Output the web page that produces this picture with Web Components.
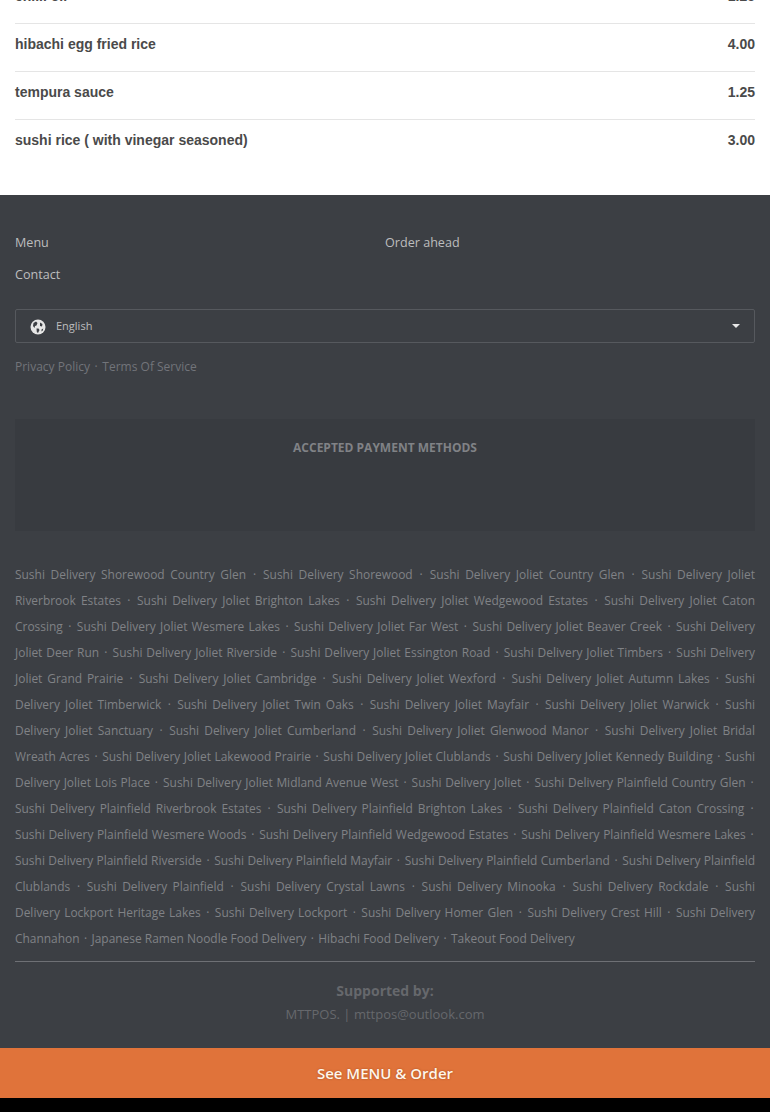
<!DOCTYPE html>
<html lang="en">
<head>
<meta charset="utf-8">
<title>Menu</title>
<style>
  html, body { margin: 0; height: 1112px; overflow: hidden; background: #000; }
  body { font-family: "Open Sans", sans-serif; }
  menu-list { margin-top: -24px; }
</style>
</head>
<body>
<menu-list>
  <menu-row name="chilli oil" price="1.25"></menu-row>
  <menu-row name="hibachi egg fried rice" price="4.00"></menu-row>
  <menu-row name="tempura sauce" price="1.25"></menu-row>
  <menu-row name="sushi rice ( with vinegar seasoned)" price="3.00" last></menu-row>
</menu-list>
<site-footer></site-footer>
<order-bar>See MENU &amp; Order</order-bar>

<script>
const AREAS = [
  'Shorewood Country Glen', 'Shorewood', 'Joliet Country Glen', 'Joliet Riverbrook Estates',
  'Joliet Brighton Lakes', 'Joliet Wedgewood Estates', 'Joliet Caton Crossing', 'Joliet Wesmere Lakes',
  'Joliet Far West', 'Joliet Beaver Creek', 'Joliet Deer Run', 'Joliet Riverside',
  'Joliet Essington Road', 'Joliet Timbers', 'Joliet Grand Prairie', 'Joliet Cambridge',
  'Joliet Wexford', 'Joliet Autumn Lakes', 'Joliet Timberwick', 'Joliet Twin Oaks',
  'Joliet Mayfair', 'Joliet Warwick', 'Joliet Sanctuary', 'Joliet Cumberland',
  'Joliet Glenwood Manor', 'Joliet Bridal Wreath Acres', 'Joliet Lakewood Prairie', 'Joliet Clublands',
  'Joliet Kennedy Building', 'Joliet Lois Place', 'Joliet Midland Avenue West', 'Joliet',
  'Plainfield Country Glen', 'Plainfield Riverbrook Estates', 'Plainfield Brighton Lakes', 'Plainfield Caton Crossing',
  'Plainfield Wesmere Woods', 'Plainfield Wedgewood Estates', 'Plainfield Wesmere Lakes', 'Plainfield Riverside',
  'Plainfield Mayfair', 'Plainfield Cumberland', 'Plainfield Clublands', 'Plainfield',
  'Crystal Lawns', 'Minooka', 'Rockdale', 'Lockport Heritage Lakes',
  'Lockport', 'Homer Glen', 'Crest Hill', 'Channahon'
];
const LINKS = AREAS.map(a => 'Sushi Delivery ' + a).concat([
  'Japanese Ramen Noodle Food Delivery', 'Hibachi Food Delivery', 'Takeout Food Delivery'
]);

class MenuList extends HTMLElement {
  constructor() {
    super();
    this.shadow = this.attachShadow({ mode: 'open' });
    this.shadow.innerHTML = `
      <style>
        :host { display: block; background: #fff; padding: 0 15px 27px; }
      </style>
      <slot></slot>
    `;
  }
}

class MenuRow extends HTMLElement {
  constructor() {
    super();
    this.shadow = this.attachShadow({ mode: 'open' });
  }

  connectedCallback() {
    const border = this.hasAttribute('last') ? 'none' : '1px solid #e5e5e5';
    this.shadow.innerHTML = `
      <style>
        :host {
          display: flex; justify-content: space-between; height: 48px; box-sizing: border-box;
          padding-top: 12px; border-bottom: ${border};
          font: bold 14px/17px "Liberation Sans", Arial, sans-serif; color: #4a4a4a;
        }
      </style>
      <span>${this.getAttribute('name')}</span>
      <span>${this.getAttribute('price')}</span>
    `;
  }
}

class LanguageSelect extends HTMLElement {
  constructor() {
    super();
    this.shadow = this.attachShadow({ mode: 'open' });
    this.shadow.innerHTML = `
      <style>
        :host {
          display: flex; align-items: center; height: 34px; box-sizing: border-box;
          padding: 0 14px; border: 1px solid #56595e; border-radius: 2px;
          font-size: 11px; color: #bcbdbe;
        }
        svg { width: 16px; height: 16px; margin: 1px 10px 0 0; }
        span { flex: 1; padding-bottom: 2px; }
        i { width: 0; height: 0; border: 4px solid transparent; border-top: 4px solid #e8e8e8; border-bottom: 0; }
      </style>
      <svg viewBox="0 0 16 16">
        <circle cx="8" cy="8" r="7.5" fill="#e6e6e6"/>
        <path d="M3.5 4 6 2.5 7.5 4 6.5 6.5 5 7 4.5 9 3 7ZM10 3.5 12.5 5 12 7.5 10 7ZM6.5 9.5 8.5 9.5 9.5 11 8 14 6.8 13ZM11.5 10.5 13.2 9.5 12.8 11.5 11.5 12.5Z" fill="#3c3f44"/>
      </svg>
      <span>English</span>
      <i></i>
    `;
  }
}

class LinkCloud extends HTMLElement {
  constructor() {
    super();
    this.shadow = this.attachShadow({ mode: 'open' });
  }

  connectedCallback() {
    this.shadow.innerHTML = `
      <style>
        :host { display: block; font-size: 11.95px; line-height: 26px; color: #808286; text-align: justify; }
        b { font-weight: normal; margin: 0 1.3px; }
      </style>
      ${LINKS.map((l, i) => l + (i < LINKS.length - 1 ? ' <b>·</b> ' : '')).join('')}
    `;
  }
}

class SiteFooter extends HTMLElement {
  constructor() {
    super();
    this.shadow = this.attachShadow({ mode: 'open' });
    this.shadow.innerHTML = `
      <style>
        :host {
          display: block; height: 853px; box-sizing: border-box; padding: 32px 15px 0;
          background: #3c3f44; font-size: 12.6px; color: #bcbdbe;
        }
        .nav { display: grid; grid-template-columns: 370px 1fr; grid-auto-rows: 32px; line-height: 32px; }
        language-select { margin-top: 18px; }
        .legal { margin-top: 15px; font-size: 12px; line-height: 18px; color: #72747a; }
        .legal b { font-weight: normal; margin: 0 1.5px; }
        .pay {
          margin-top: 43px; height: 112px; box-sizing: border-box; padding-top: 20px;
          background: #383b40; text-align: center;
          font-size: 12px; font-weight: 700; line-height: 17px; color: #808286;
        }
        link-cloud { margin-top: 31px; }
        hr { margin: 9px 0 0; border: 0; border-top: 1px solid #6e7075; }
        .support { margin-top: 19px; text-align: center; color: #66686c; }
        .support strong { display: block; font-size: 14px; line-height: 19px; }
        .support p { margin: 5px 0 0; font-size: 13px; line-height: 18px; }
      </style>
      <div class="nav">
        <span>Menu</span><span>Order ahead</span>
        <span>Contact</span>
      </div>
      <language-select></language-select>
      <div class="legal">Privacy Policy <b>·</b> Terms Of Service</div>
      <div class="pay">ACCEPTED PAYMENT METHODS</div>
      <link-cloud></link-cloud>
      <hr>
      <div class="support">
        <strong>Supported by:</strong>
        <p>MTTPOS. | mttpos@outlook.com</p>
      </div>
    `;
  }
}

class OrderBar extends HTMLElement {
  constructor() {
    super();
    this.shadow = this.attachShadow({ mode: 'open' });
    this.shadow.innerHTML = `
      <style>
        :host {
          display: flex; align-items: center; justify-content: center; height: 50px;
          background: #e0733a; color: #fff6ea; font-size: 15px; font-weight: 600;
          text-shadow: 0 0 2px rgba(120, 50, 10, .6);
        }
      </style>
      <slot></slot>
    `;
  }
}

customElements.define('menu-list', MenuList);
customElements.define('menu-row', MenuRow);
customElements.define('language-select', LanguageSelect);
customElements.define('link-cloud', LinkCloud);
customElements.define('site-footer', SiteFooter);
customElements.define('order-bar', OrderBar);
</script>
</body>
</html>
